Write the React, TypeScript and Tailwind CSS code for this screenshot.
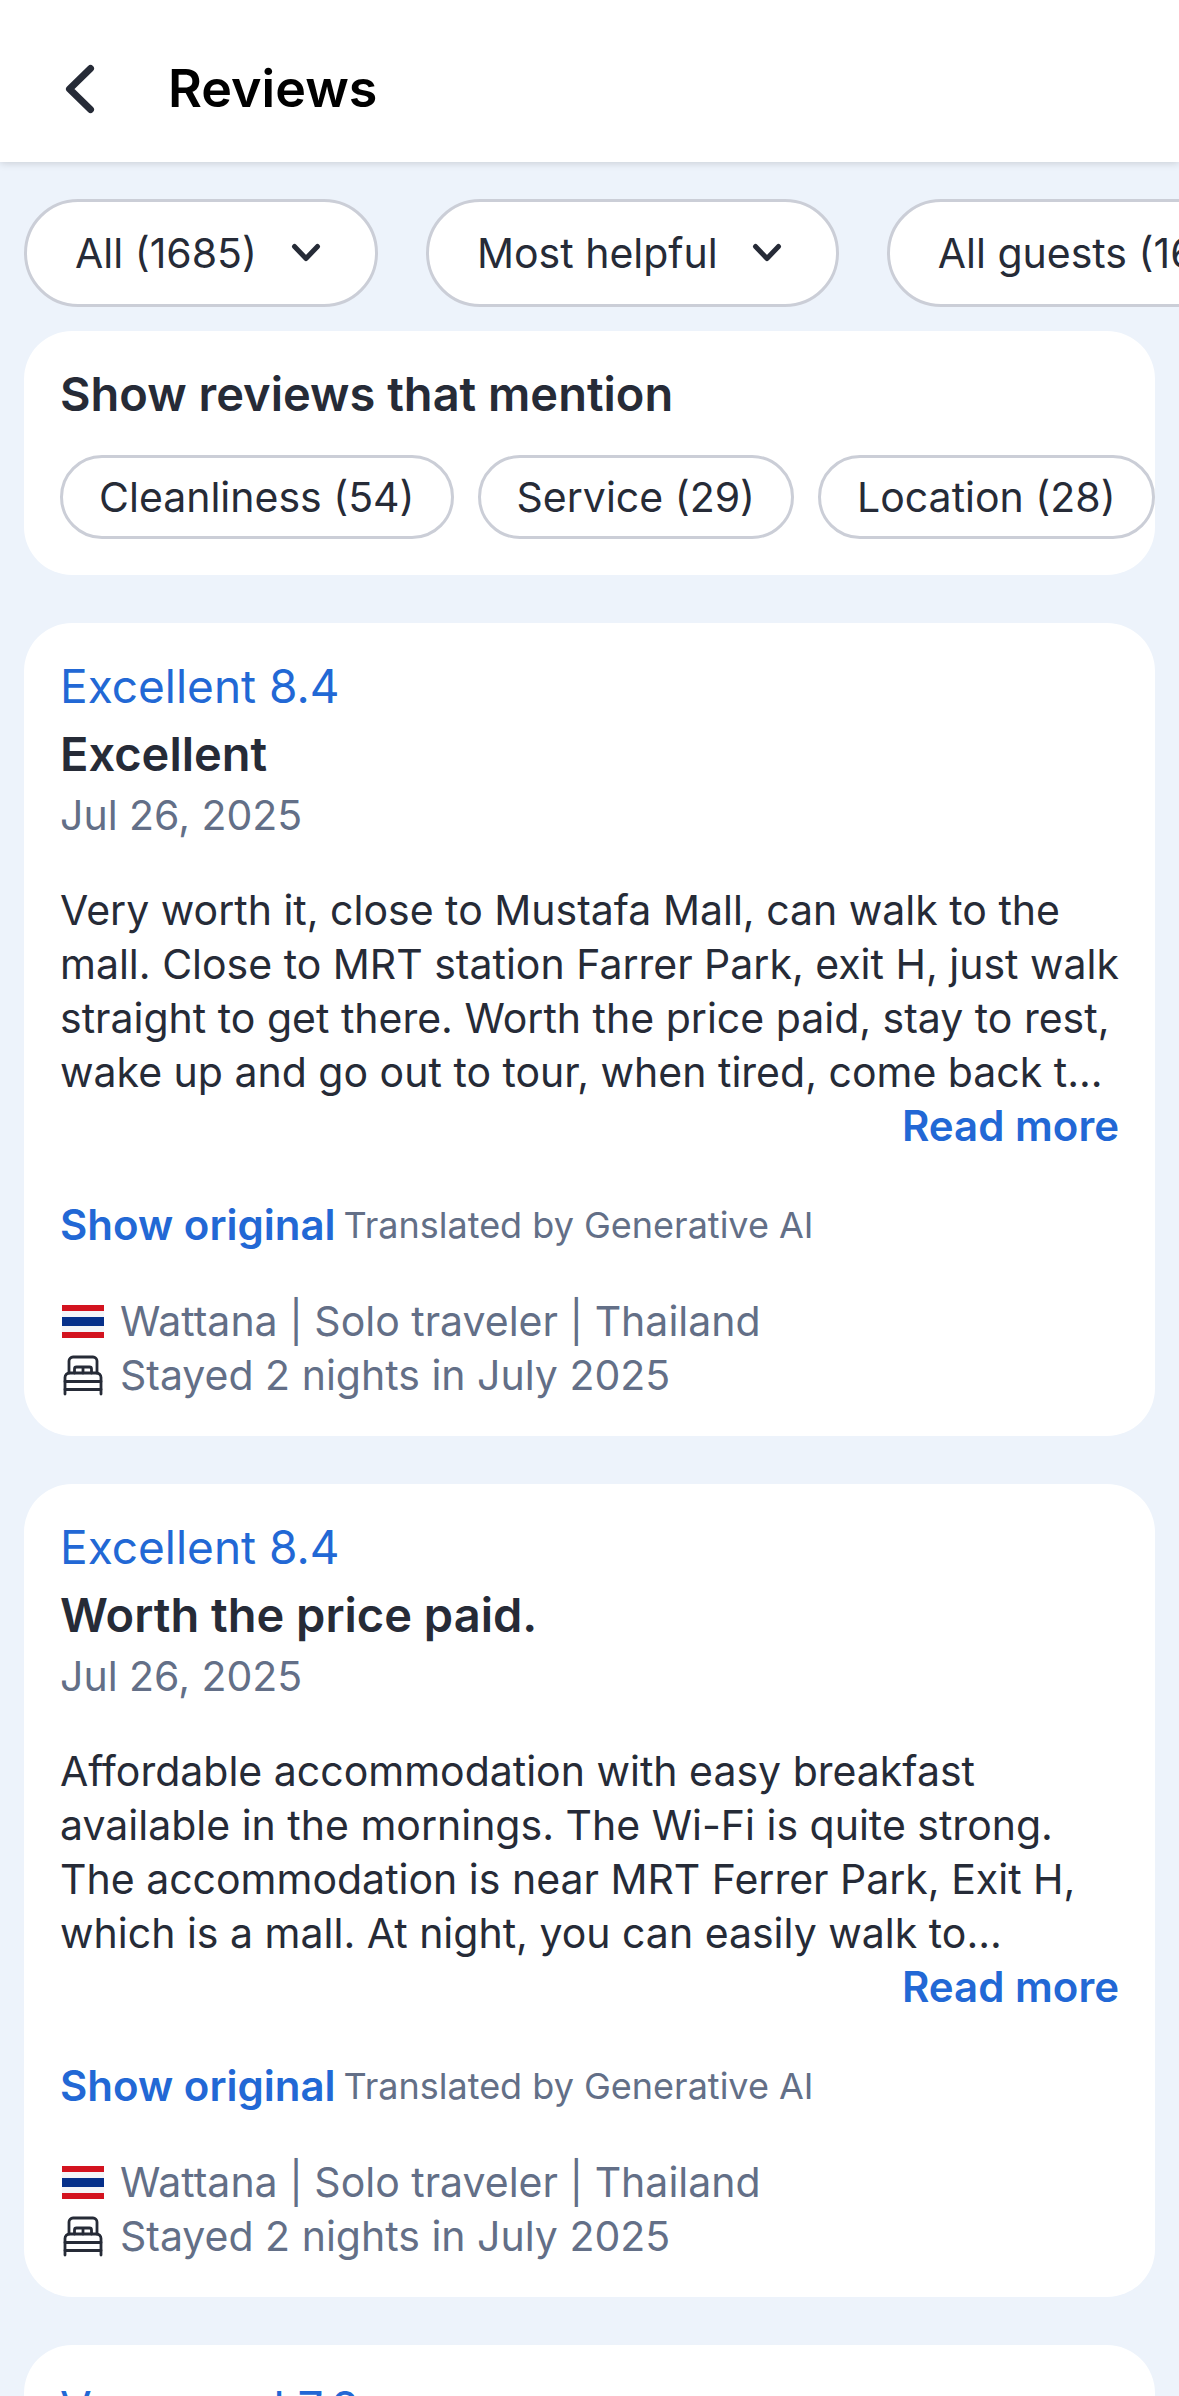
interface Review {
  id: number;
  score: string;
  title?: string;
  date?: string;
  body?: string;
  traveler?: string;
  stay?: string;
}

const filters = ['All (1685)', 'Most helpful', 'All guests (1685)'];

const mentions = ['Cleanliness (54)', 'Service (29)', 'Location (28)'];

const reviews: Review[] = [
  {
    id: 1,
    score: 'Excellent 8.4',
    title: 'Excellent',
    date: 'Jul 26, 2025',
    body: 'Very worth it, close to Mustafa Mall, can walk to the mall. Close to MRT station Farrer Park, exit H, just walk straight to get there. Worth the price paid, stay to rest, wake up and go out to tour, when tired, come back t...',
    traveler: 'Wattana | Solo traveler | Thailand',
    stay: 'Stayed 2 nights in July 2025',
  },
  {
    id: 2,
    score: 'Excellent 8.4',
    title: 'Worth the price paid.',
    date: 'Jul 26, 2025',
    body: 'Affordable accommodation with easy breakfast available in the mornings. The Wi-Fi is quite strong. The accommodation is near MRT Ferrer Park, Exit H, which is a mall. At night, you can easily walk to...',
    traveler: 'Wattana | Solo traveler | Thailand',
    stay: 'Stayed 2 nights in July 2025',
  },
  {
    id: 3,
    score: 'Very good 7.2',
  },
];

function ThaiFlag() {
  return (
    <svg className="w-[42px] h-[33px] shrink-0" viewBox="0 0 42 33" aria-hidden="true">
      <rect width="42" height="33" fill="#d3131f" />
      <rect y="6" width="42" height="21" fill="#f4f5f8" />
      <rect y="12" width="42" height="9" fill="#06308a" />
    </svg>
  );
}

function BedIcon() {
  return (
    <svg
      className="w-11 h-11 shrink-0"
      viewBox="0 0 44 44"
      fill="none"
      stroke="currentColor"
      strokeWidth="2.8"
      strokeLinecap="round"
      strokeLinejoin="round"
      aria-hidden="true"
    >
      <path d="M9 20V8a4 4 0 0 1 4-4h20a4 4 0 0 1 4 4V20" />
      <path d="M14.500 20v-4a2 2 0 0 1 2-2h13a2 2 0 0 1 2 2V20M23 14V20" />
      <path d="M5 41V24.500a4.500 4.500 0 0 1 4.500-4.500h27a4.500 4.500 0 0 1 4.500 4.500V41" />
      <path d="M5 28.500h36M5 36.500h36" />
    </svg>
  );
}

function ReviewCard({ review }: { review: Review }) {
  return (
    <article className="bg-white rounded-[48px] px-9 pt-[29px] pb-[34px]">
      <p className="text-[46px] leading-[68px] text-[#2268d5]">{review.score}</p>
      {review.title && <h2 className="text-[47px] leading-[68px] font-semibold">{review.title}</h2>}
      {review.date && <p className="text-[41px] leading-[54px] text-[#636f87]">{review.date}</p>}

      {review.body && (
        <>
          <p className="mt-[41px] -mr-3 text-[41px] leading-[54px]">{review.body}</p>
          <div className="flex justify-end">
            <button className="text-[42px] leading-[54px] font-semibold text-[#2268d5]">Read more</button>
          </div>
          <div className="mt-[45px] flex items-center gap-2">
            <button className="text-[42px] leading-[54px] font-semibold text-[#2268d5]">Show original</button>
            <span className="text-[36px] leading-[54px] text-[#636f87]">Translated by Generative AI</span>
          </div>
        </>
      )}

      {review.traveler && (
        <div className="mt-[42px] text-[41px] leading-[54px] text-[#636f87]">
          <div className="flex items-center gap-4">
            <span className="flex w-11 justify-end">
              <ThaiFlag />
            </span>
            <span>{review.traveler}</span>
          </div>
          <div className="flex items-center gap-4">
            <span className="text-[#262b37]">
              <BedIcon />
            </span>
            <span>{review.stay}</span>
          </div>
        </div>
      )}
    </article>
  );
}

export default function App() {
  return (
    <div className="h-screen flex flex-col overflow-hidden bg-[#edf3fb] text-[#262b37] font-['Inter',sans-serif]">
      <header className="relative z-10 shrink-0 flex items-center gap-[68px] bg-white px-[60px] pt-[55px] pb-[39px] shadow-[0_1px_8px_rgba(0,0,0,0.16)]">
        <button className="flex w-10 justify-center" aria-label="Back">
          <svg className="w-10 h-14" viewBox="0 0 40 56" fill="none" stroke="currentColor" strokeWidth="7" strokeLinecap="round" strokeLinejoin="round">
            <path d="M30.500 7.500 9.500 28l21 20.500" />
          </svg>
        </button>
        <h1 className="text-[52px] leading-[68px] font-semibold text-black">Reviews</h1>
      </header>

      <main className="flex-1 min-h-0 overflow-y-auto [scrollbar-width:none]">
        {/* Filters */}
        <div className="flex gap-12 overflow-x-auto [scrollbar-width:none] px-6 pt-[37px] pb-6">
          {filters.map((filter) => (
            <button
              key={filter}
              className="flex h-[108px] shrink-0 items-center gap-[30px] whitespace-nowrap rounded-full border-3 border-[#cbced7] bg-white px-12 text-[41px] leading-[54px]"
            >
              {filter}
              <svg className="w-10 h-6" viewBox="0 0 40 24" fill="none" stroke="currentColor" strokeWidth="5" strokeLinecap="round" strokeLinejoin="round" aria-hidden="true">
                <path d="M7.500 5.500 19 17.500l11.500-12" />
              </svg>
            </button>
          ))}
        </div>

        <div className="flex flex-col gap-12 px-6 pb-12">
          {/* Mentions */}
          <section className="overflow-hidden rounded-[48px] bg-white pt-[29px] pb-9">
            <h2 className="px-9 text-[47px] leading-[68px] font-semibold">Show reviews that mention</h2>
            <div className="mt-[27px] flex gap-6 overflow-x-auto [scrollbar-width:none] pl-9">
              {mentions.map((mention) => (
                <button
                  key={mention}
                  className="h-[84px] shrink-0 whitespace-nowrap rounded-full border-3 border-[#cbced7] px-9 text-[41px] leading-[54px]"
                >
                  {mention}
                </button>
              ))}
            </div>
          </section>

          {reviews.map((review) => (
            <ReviewCard key={review.id} review={review} />
          ))}
        </div>
      </main>
    </div>
  );
}
